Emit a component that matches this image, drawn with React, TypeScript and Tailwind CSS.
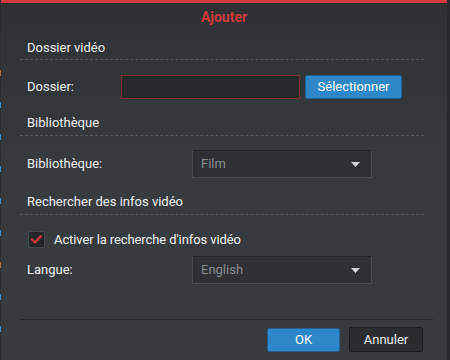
const marks = [70, 102, 134, 166, 198, 230, 262, 294, 326];

function Caret() {
  return (
    <svg width="9" height="5" viewBox="0 0 9 5" className="shrink-0">
      <path d="M0 0h9L4.5 5z" fill="#d4d6d8" />
    </svg>
  );
}

function Select({ value }: { value: string }) {
  return (
    <div className="flex h-[28px] w-[180px] items-center justify-between border border-[#494c4f] border-t-[#222426] bg-[#2e3033] pl-[8px] pr-[11px]">
      <span className="text-[13px] text-[#8a8d90]">{value}</span>
      <Caret />
    </div>
  );
}

function Heading({ children, top, gap }: { children: string; top: string; gap: string }) {
  return (
    <>
      <div className={`${top} h-[16px] pl-[7px] text-[13px] leading-[16px] text-[#eeeff0]`}>{children}</div>
      <div className={`${gap} h-0 border-t border-dashed border-[#55585b]`} />
    </>
  );
}

export default function App() {
  return (
    <div
      className="flex h-[360px] w-[450px] overflow-hidden bg-[#2a2c2e] text-[#eeeff0]"
      style={{ fontFamily: "Roboto, 'Liberation Sans', sans-serif" }}
    >
      <div className="relative w-px">
        {marks.map((y, i) => (
          <div
            key={y}
            className={`absolute left-0 h-[6px] w-px ${i === 0 || i === 6 ? "bg-[#b0703a]" : "bg-[#3d8fd0]"}`}
            style={{ top: y }}
          />
        ))}
      </div>

      <div className="flex w-[446px] flex-col border-t-[3px] border-[#d8393c] bg-gradient-to-b from-[#2e3033] via-[#383b3e] to-[#383b3e]">
        <div className="flex h-[29px] items-center justify-center text-[14px] font-bold text-[#d23a3c]">Ajouter</div>

        <div className="flex flex-col pl-[19px] pr-[23px]">
          <Heading top="mt-[8px]" gap="mt-[3px]">Dossier vidéo</Heading>

          <div className="mt-[15px] flex h-[24px] items-center pl-[7px]">
            <span className="w-[94px] text-[13px]">Dossier:</span>
            <div className="h-[24px] w-[179px] border border-[#7a2e2f] bg-[#27292b]" />
            <button className="ml-[5px] h-[24px] w-[97px] rounded-[2px] border border-[#1f5f94] bg-[#2d87c9] text-[13px] text-white">
              Sélectionner
            </button>
          </div>

          <Heading top="mt-[16px]" gap="mt-[4px]">Bibliothèque</Heading>

          <div className="mt-[14px] flex items-center pl-[7px]">
            <span className="w-[165px] text-[13px]">Bibliothèque:</span>
            <Select value="Film" />
          </div>

          <Heading top="mt-[16px]" gap="mt-[4px]">Rechercher des infos vidéo</Heading>

          <div className="mt-[16px] flex h-[17px] items-center pl-[8px]">
            <div className="flex h-[17px] w-[17px] items-center justify-center rounded-[2px] border border-[#46494c] bg-[#232527]">
              <svg width="11" height="9" viewBox="0 0 11 9">
                <path d="M1 4.5l3 3L10 1" fill="none" stroke="#d8383b" strokeWidth="2.2" strokeLinecap="round" strokeLinejoin="round" />
              </svg>
            </div>
            <span className="ml-[9px] text-[13px] tracking-[-0.1px]">Activer la recherche d'infos vidéo</span>
          </div>

          <div className="mt-[8px] flex items-center pl-[7px]">
            <span className="w-[165px] text-[13px]">Langue:</span>
            <Select value="English" />
          </div>
        </div>

        <div className="ml-[19px] mr-[14px] mt-[35px] h-0 border-t border-[#27292b]" />

        <div className="mt-[7px] flex h-[25px] items-center justify-end gap-[9px] pr-[24px]">
          <button className="h-[24px] w-[73px] rounded-[2px] border border-[#1f5f94] bg-[#2d87c9] text-[13px] text-white">OK</button>
          <button className="h-[25px] w-[74px] rounded-[2px] border border-[#1c1d1f] bg-[#2a2c2e] text-[13px] text-[#eeeff0]">
            Annuler
          </button>
        </div>
      </div>

      <div className="w-[3px] bg-[#28292b]" />
    </div>
  );
}
